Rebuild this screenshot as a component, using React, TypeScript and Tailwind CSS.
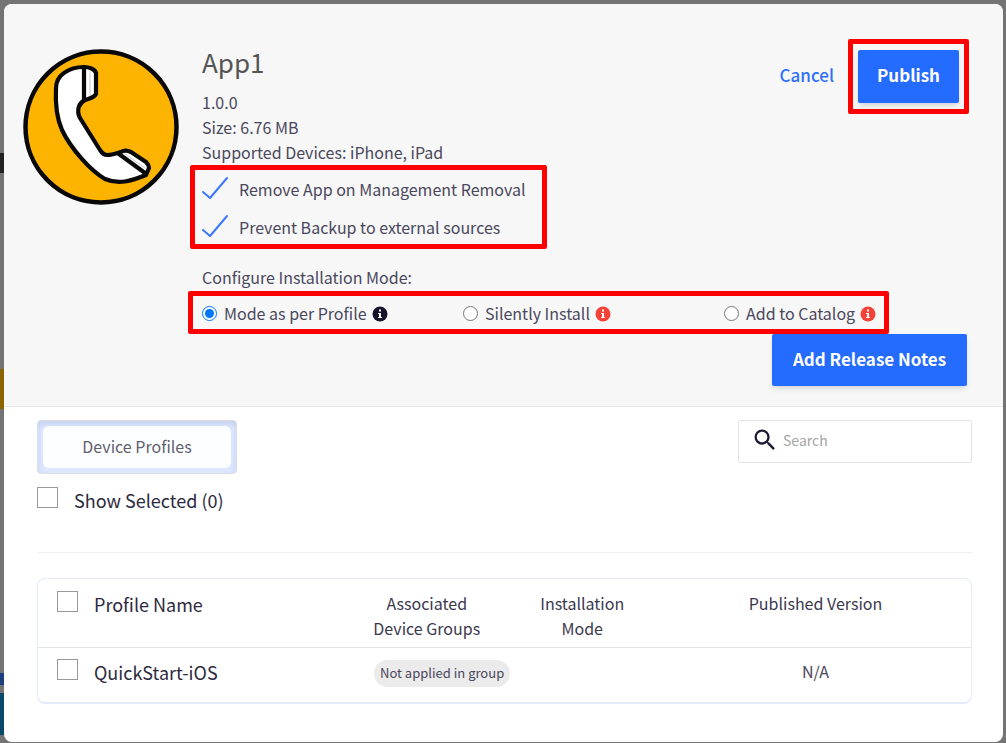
import React, { useState } from 'react';
import { MdSearch } from 'react-icons/md';

const modes = [
  { id: 'profile', label: 'Mode as per Profile', iconColor: 'text-[#15132b]' },
  { id: 'silent', label: 'Silently Install', iconColor: 'text-[#f44336]' },
  { id: 'catalog', label: 'Add to Catalog', iconColor: 'text-[#f44336]' },
];

const profiles = [{ name: 'QuickStart-iOS', group: 'Not applied in group', mode: '', version: 'N/A' }];

const boxClass = 'size-[21px] shrink-0 appearance-none border border-[#999] bg-white checked:bg-[#246bfd]';

const PhoneLogo: React.FC = () => (
  <svg viewBox="0 0 156 156" className="size-[156px] shrink-0" role="img" aria-label="App1 icon">
    <circle cx="78" cy="78" r="75.5" fill="#fcb400" stroke="#080808" strokeWidth="4.5" />
    <g fill="#fff" stroke="#080808" strokeWidth="4.2" strokeLinejoin="round" strokeLinecap="round">
      <path d="M61 18 C46 18 33 26 33 39 C32 58 35 72 39 81 C48 100 68 122 82 130 C96 136 108 132 123 126 L126 119 C126 116 125 115 123 113 L108 103 C104 101 101 101 98 103 C92 105 88 106 84 106 C81 106 79 104 77 101 L57 69 C53 61 56 54 62 51 C67 49 71 49 73 45 L73 24 C72 20 66 18 61 18 Z" />
      <path d="M61 18 V50" fill="none" />
      <path d="M96 105 L122 124" fill="none" />
      <path d="M102 105 L122 119" fill="none" stroke="#c9c9c9" strokeWidth="1" />
      <path d="M67 23 V46" fill="none" stroke="#c9c9c9" strokeWidth="1" />
    </g>
  </svg>
);

interface InfoIconProps {
  className?: string;
}

const InfoIcon: React.FC<InfoIconProps> = ({ className = '' }) => (
  <svg viewBox="0 0 16 16" className={`ml-[5px] size-4 ${className}`} aria-hidden="true">
    <circle cx="8" cy="8" r="7.5" fill="currentColor" />
    <path d="M7 3.5h2v2H7z M6 7h3v4h1v1H6v-1h1V8H6z" fill="#fff" />
  </svg>
);

interface OptionProps {
  id: string;
  label: string;
}

const CheckOption: React.FC<OptionProps> = ({ id, label }) => (
  <div className="flex h-[38px] items-center gap-[11px]">
    <span className="grid">
      <input id={id} type="checkbox" defaultChecked className="peer col-start-1 row-start-1 size-[26px] appearance-none" />
      <svg viewBox="0 0 26 26" className="pointer-events-none invisible col-start-1 row-start-1 size-[26px] peer-checked:visible">
        <path d="M1 16 L8 22 L25 2" fill="none" stroke="#3b78ff" strokeWidth="2" strokeLinecap="round" strokeLinejoin="round" />
      </svg>
    </span>
    <label htmlFor={id}>{label}</label>
  </div>
);

const Backdrop: React.FC = () => (
  <div aria-hidden="true" className="absolute inset-0 bg-[#747474]">
    <div className="absolute top-[153px] left-0 h-5 w-1 bg-[#222]" />
    <div className="absolute top-[369px] left-0 h-10 w-1 bg-[#8a6500]" />
    <div className="absolute top-[673px] left-0 h-3 w-1 bg-[#1c3f80]" />
    <div className="absolute top-[693px] left-0 h-[42px] w-1 bg-[#08486a]" />
  </div>
);

export default function App() {
  const [mode, setMode] = useState('profile');

  return (
    <div className="relative flex min-h-screen flex-col pt-1 pr-[3px] pb-0.5 pl-1 font-['Noto_Sans_CJK_SC',sans-serif] text-base leading-[25px] text-[#4a475c]">
      <Backdrop />
      <main className="relative flex flex-1 flex-col overflow-hidden rounded-lg bg-white">
        <header className="flex gap-[23px] border-b border-[#e6e6e6] bg-[#f7f7f7] pt-[35px] pr-[34px] pb-5 pl-[19px]">
          <div className="pt-[10px]">
            <PhoneLogo />
          </div>
          <div className="flex min-w-0 flex-1 flex-col items-start">
            <div className="flex w-full items-start justify-between">
              <div className="pt-[3px]">
                <h1 className="mb-2 text-[26px] leading-10 text-[#555]">App1</h1>
                <p>1.0.0</p>
                <p>Size: 6.76 MB</p>
                <p>Supported Devices: iPhone, iPad</p>
              </div>
              <div className="flex items-center gap-[14px] text-[17px]">
                <button type="button" className="pb-1 font-medium text-[#2f70fb]">Cancel</button>
                <div className="rounded-xs border-[5px] border-[#f00] px-[5px] py-1.5">
                  <button type="button" className="h-[53px] w-[101px] rounded-xs bg-[#246bff] pb-1 font-bold text-white shadow-md">
                    Publish
                  </button>
                </div>
              </div>
            </div>

            <div className="-ml-3 h-[84px] w-[357px] rounded-xs border-[5px] border-[#f00] pl-[7px]">
              <CheckOption id="remove-app" label="Remove App on Management Removal" />
              <CheckOption id="prevent-backup" label="Prevent Backup to external sources" />
            </div>

            <fieldset className="w-full">
              <legend className="pt-4 pb-[1px]">Configure Installation Mode:</legend>
              <div className="-ml-[14px] grid w-[701px] grid-cols-[261px_261px_auto] rounded-xs border-[5px] border-[#f00] pt-[5px] pb-[3px] pl-[9px]">
                {modes.map((item) => (
                  <div key={item.id} className="flex items-center">
                    <input
                      id={item.id}
                      type="radio"
                      name="mode"
                      checked={mode === item.id}
                      onChange={() => setMode(item.id)}
                      className="mr-[7px] size-[15px]"
                    />
                    <label htmlFor={item.id}>{item.label}</label>
                    <InfoIcon className={item.iconColor} />
                  </div>
                ))}
              </div>
            </fieldset>

            <button
              type="button"
              className="mr-0.5 h-[52px] w-[195px] self-end rounded-xs bg-[#246bff] pb-1 text-[17px] font-bold text-white shadow-md"
            >
              Add Release Notes
            </button>
          </div>
        </header>

        <section className="pt-[13px] pr-[31px] pb-[38px] pl-[33px]">
          <div className="flex items-start justify-between">
            <div className="h-[54px] w-[200px] rounded-sm border border-[#dcdfe6] bg-[#dfe8ff] p-[5px] shadow-[inset_0_3px_6px_#c3cfee]">
              <button type="button" className="h-full w-full rounded-md bg-[#fdfeff] pb-[3px] text-base text-[#62606f]">
                Device Profiles
              </button>
            </div>
            <div className="flex h-[43px] w-[234px] items-center rounded-xs border border-[#e4e4e4] pb-[3px] pl-3">
              <MdSearch className="size-7 shrink-0 text-[#1d1a36]" />
              <input
                type="search"
                aria-label="Search"
                placeholder="Search"
                className="ml-1 w-full min-w-0 text-sm outline-none placeholder:text-[#a5a5a5]"
              />
            </div>
          </div>

          <div className="flex gap-4 border-b border-[#eee] pt-[13px] pb-[39px] text-lg leading-[26px] text-[#2d2a40]">
            <input id="show-selected" type="checkbox" className={boxClass} />
            <label htmlFor="show-selected">Show Selected (0)</label>
          </div>

          <div className="mt-[25px] overflow-hidden rounded-lg border border-b-2 border-[#e3eafb]">
            <table className="w-full table-fixed">
              <colgroup>
                <col className="w-4/12" />
                <col className="w-2/12" />
                <col className="w-2/12" />
                <col className="w-4/12" />
              </colgroup>
              <thead>
                <tr className="border-b border-[#e3e3e3] align-top text-[#3b384e]">
                  <th className="pt-3 pl-[19px] font-normal">
                    <div className="flex gap-4 text-lg leading-[26px] text-[#2d2a40]">
                      <input id="all-profiles" type="checkbox" className={boxClass} />
                      <label htmlFor="all-profiles">Profile Name</label>
                    </div>
                  </th>
                  <th className="px-4 pt-3 pb-1.5 font-normal">Associated Device Groups</th>
                  <th className="px-8 pt-3 pb-1.5 font-normal">Installation Mode</th>
                  <th className="pt-3 font-normal">Published Version</th>
                </tr>
              </thead>
              <tbody>
                {profiles.map((profile) => (
                  <tr key={profile.name} className="h-[54px] align-top">
                    <td className="pt-[11px] pl-[19px]">
                      <div className="flex gap-4 text-lg leading-[26px] text-[#2d2a40]">
                        <input id={profile.name} type="checkbox" className={boxClass} />
                        <label htmlFor={profile.name}>{profile.name}</label>
                      </div>
                    </td>
                    <td className="pt-[11px] pl-[25px] whitespace-nowrap">
                      <span className="inline-flex h-[27px] items-center rounded-full bg-[#ebebeb] px-1.5 pb-0.5 text-[13px]">
                        {profile.group}
                      </span>
                    </td>
                    <td>{profile.mode}</td>
                    <td className="pt-[11px] text-center">{profile.version}</td>
                  </tr>
                ))}
              </tbody>
            </table>
          </div>
        </section>
      </main>
    </div>
  );
}
